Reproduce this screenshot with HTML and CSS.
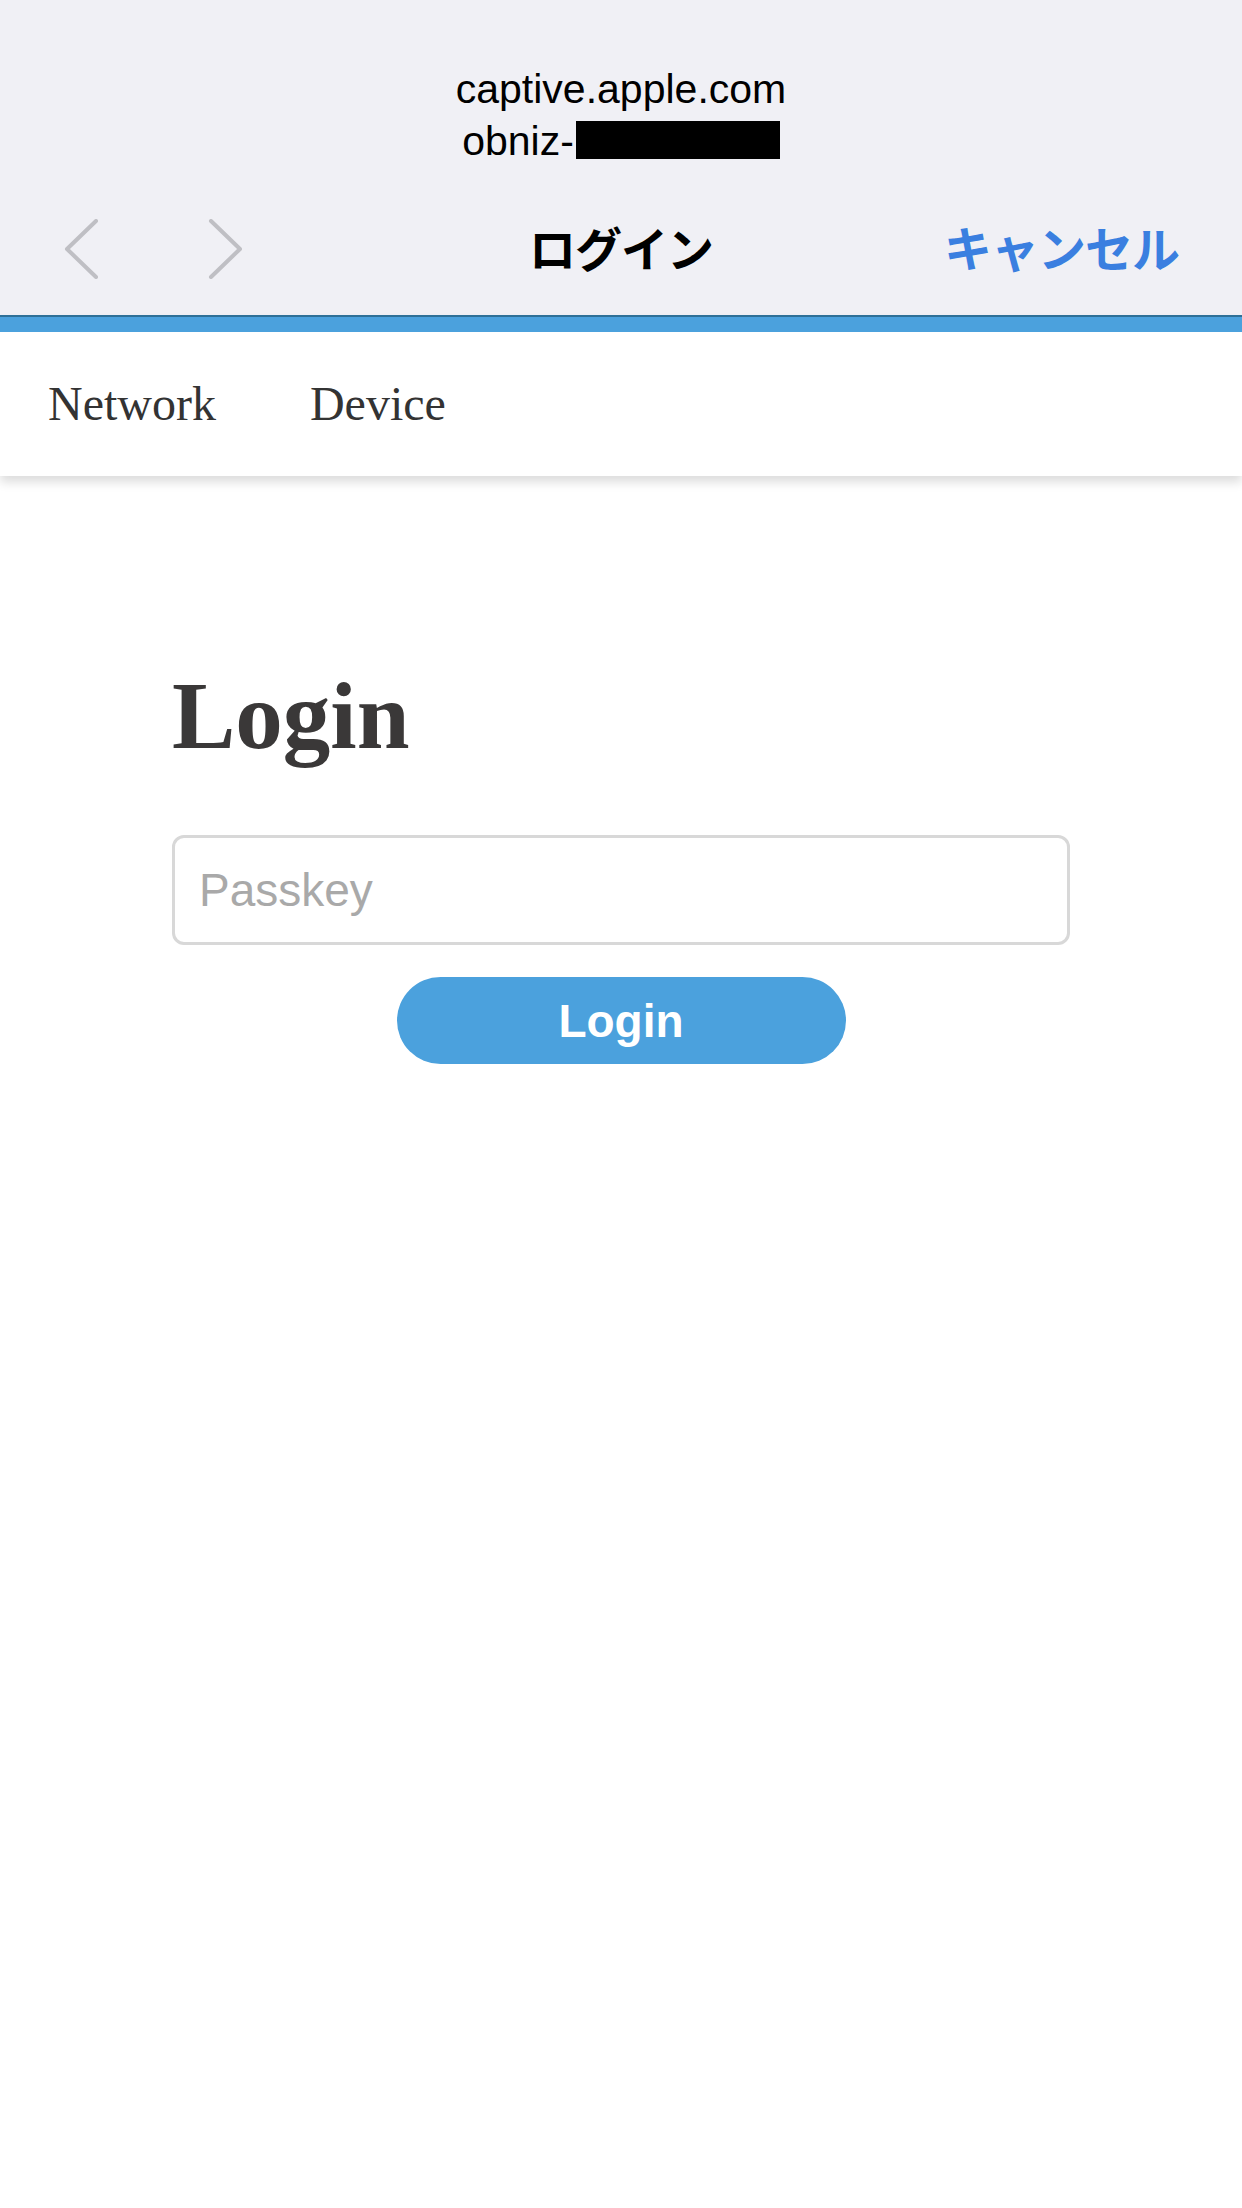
FILE: index.html
```html
<!DOCTYPE html>
<html lang="ja">
<head>
<meta charset="utf-8">
<title>ログイン</title>
<link rel="stylesheet" href="styles.css">
</head>
<body>
<header class="sheet">
  <div class="host">
    <div class="host-line">captive.apple.com</div>
    <div class="host-line">obniz-<span class="redact"></span></div>
  </div>
  <div class="toolbar">
    <div class="arrows">
      <svg class="chev" width="36" height="60" viewBox="0 0 36 60"><path d="M33 2 L4 30 L33 58" fill="none" stroke="#bfbfc4" stroke-width="4" stroke-linecap="round" stroke-linejoin="round"/></svg>
      <svg class="chev" width="36" height="60" viewBox="0 0 36 60"><path d="M3 2 L32 30 L3 58" fill="none" stroke="#bfbfc4" stroke-width="4" stroke-linecap="round" stroke-linejoin="round"/></svg>
    </div>
    <div class="title">ログイン</div>
    <div class="cancel">キャンセル</div>
  </div>
</header>
<nav class="topnav">
  <a class="navlink">Network</a>
  <a class="navlink">Device</a>
</nav>
<main class="content">
  <h1 class="heading">Login</h1>
  <input class="passkey" type="password" placeholder="Passkey">
  <div class="actions">
    <button class="login-btn">Login</button>
  </div>
</main>
</body>
</html>
```
FILE: styles.css
```css
html, body {
  margin: 0;
  padding: 0;
  background: #ffffff;
}
body {
  width: 1242px;
  min-height: 2208px;
}
.sheet {
  background: #f0f0f5;
  padding: 63px 0 16px;
  border-bottom: 2px solid #2f7199;
  font-family: "Liberation Sans", Arial, sans-serif;
}
.host {
  display: flex;
  flex-direction: column;
  align-items: center;
}
.host-line {
  font-size: 41px;
  line-height: 52px;
  color: #000;
  height: 52px;
  display: flex;
  align-items: center;
  letter-spacing: 0;
}
.redact {
  display: inline-block;
  width: 204px;
  height: 38px;
  background: #000;
  margin-top: -2px;
  margin-left: 2px;
}
.toolbar {
  margin-top: 32px;
  height: 100px;
  display: grid;
  grid-template-columns: 1fr auto 1fr;
  align-items: center;
  padding: 0 63px;
}
.arrows {
  display: flex;
  align-items: center;
  gap: 109px;
}
.chev {
  display: block;
}
.title {
  font-family: "Noto Sans CJK JP", sans-serif;
  font-weight: 700;
  font-size: 47px;
  line-height: 1;
  color: #000;
  letter-spacing: -1px;
  margin-top: -6px;
}
.cancel {
  justify-self: end;
  font-family: "Noto Sans CJK JP", sans-serif;
  font-weight: 700;
  font-size: 48px;
  line-height: 1;
  color: #3a7fe0;
  letter-spacing: -1px;
  margin-top: -6px;
}
.topnav {
  border-top: 15px solid #4ba1dd;
  box-shadow: 0 6px 10px rgba(0, 0, 0, 0.14);
  height: 144px;
  display: flex;
  align-items: center;
  background: #fff;
  font-family: "Liberation Serif", "Times New Roman", serif;
  position: relative;
}
.navlink {
  padding: 0 48px;
  font-size: 48px;
  color: #333;
  margin-top: -2px;
}
.navlink + .navlink {
  padding-left: 46px;
}
.content {
  width: 898px;
  margin: 0 auto;
  padding-top: 183px;
}
.heading {
  margin: 0;
  font-family: "Liberation Serif", "Times New Roman", serif;
  font-weight: 700;
  font-size: 95px;
  line-height: 115px;
  color: #3a3838;
}
.passkey {
  display: block;
  box-sizing: border-box;
  width: 898px;
  height: 110px;
  margin-top: 61px;
  border: 3px solid #d8d8d8;
  border-radius: 12px;
  padding: 0 24px;
  font-family: "Liberation Sans", Arial, sans-serif;
  font-size: 46px;
  outline: none;
  background: #fff;
}
.passkey::placeholder {
  color: #a9a9a9;
}
.actions {
  display: flex;
  justify-content: center;
  margin-top: 32px;
}
.login-btn {
  width: 449px;
  height: 87px;
  border: none;
  border-radius: 44px;
  background: #4ba1dd;
  color: #fff;
  font-family: "Liberation Sans", Arial, sans-serif;
  font-weight: 700;
  font-size: 46px;
  padding: 0;
}
```
